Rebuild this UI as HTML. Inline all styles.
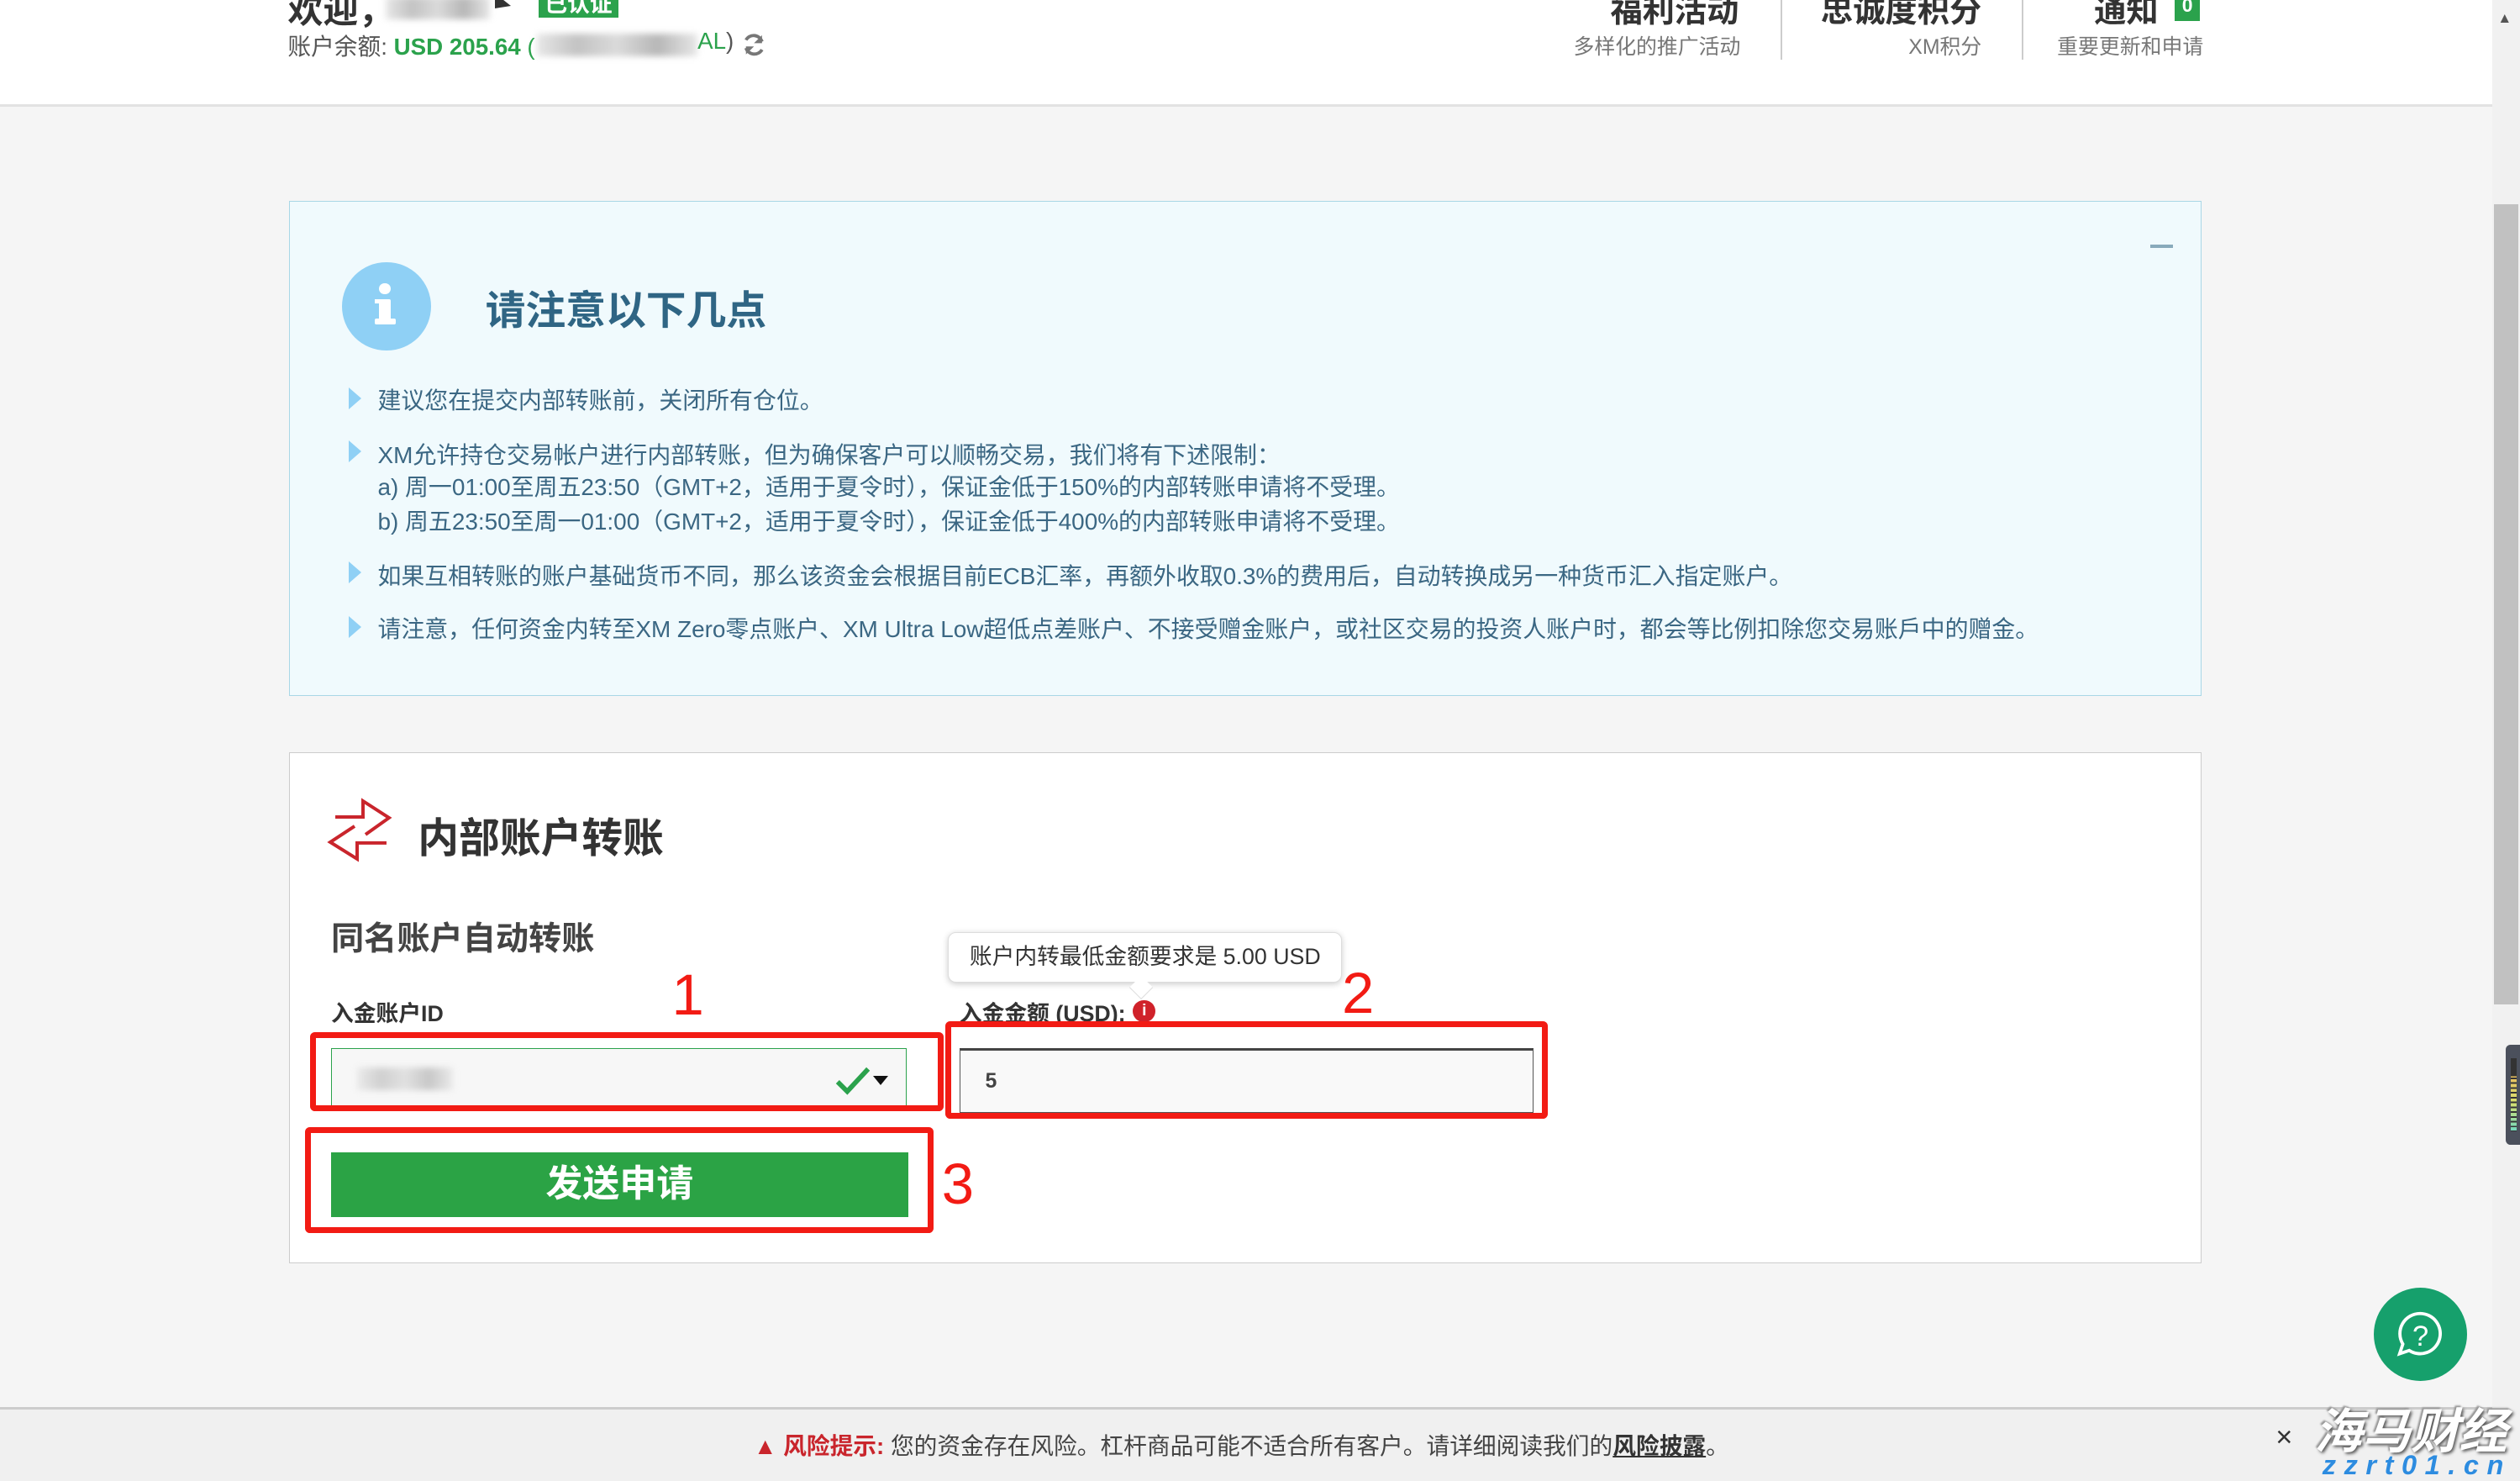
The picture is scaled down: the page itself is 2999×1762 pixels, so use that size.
<!DOCTYPE html>
<html><head><meta charset="utf-8">
<style>
html,body{margin:0;padding:0;}
body{width:2999px;height:1761px;overflow:hidden;background:#f5f5f5;font-family:"Liberation Sans","Noto Sans CJK SC",sans-serif;}
#w{position:absolute;left:0;top:0;width:1568px;height:921px;zoom:1.91263;overflow:hidden;background:#f5f5f5;}
.a{position:absolute;white-space:nowrap;}
.blur{position:absolute;background:linear-gradient(90deg,#ddd,#aaa,#ccc,#999,#ddd);filter:blur(2px);opacity:.7;}
.li{position:absolute;left:235px;font-size:14.6px;color:#3b6783;white-space:nowrap;}
.tri{position:absolute;left:217px;width:0;height:0;border-top:7px solid transparent;border-bottom:7px solid transparent;border-left:8px solid #8fd0f5;}
.red{position:absolute;border:4px solid #f21b14;border-radius:3px;box-sizing:border-box;}
.num{position:absolute;color:#f21b14;font-size:36px;font-family:"Liberation Sans",sans-serif;}
</style></head><body><div id="w">
<div class="a" style="left:0;top:0;width:1551px;height:65px;background:#fff;border-bottom:2px solid #e2e2e2;"></div>
<div class="a" style="left:179px;top:-11px;font-size:22px;font-weight:bold;color:#333;">欢迎，</div>
<div class="blur" style="left:240px;top:-2px;width:65px;height:14px;"></div>
<div class="a" style="left:308px;top:-4px;width:0;height:0;border-left:10px solid #333;border-top:8px solid transparent;border-bottom:2px solid transparent;"></div>
<div class="a" style="left:335px;top:-6px;width:50px;height:17px;background:#2ba24c;color:#fff;font-size:14px;font-weight:bold;text-align:center;line-height:17px;">已认证</div>
<div class="a" style="left:179px;top:17px;font-size:14.5px;color:#555;">账户余额: <span style="color:#2ba24c;font-weight:bold;">USD 205.64</span> <span style="color:#2ba24c;">(</span></div>
<div class="blur" style="left:334px;top:21px;width:100px;height:14px;"></div>
<div class="a" style="left:434px;top:17px;font-size:14.5px;color:#2ba24c;">AL<span style="color:#555">)</span></div>
<svg class="a" style="left:461px;top:20px" width="16" height="16" viewBox="0 0 16 16"><path d="M13 6A5.5 5.5 0 0 0 3 5M3 10A5.5 5.5 0 0 0 13 11" fill="none" stroke="#777" stroke-width="2"/><path d="M13 2v5h-5z M3 14v-5h5z" fill="#777"/></svg>
<div class="a" style="left:960px;top:-9px;width:122px;text-align:right;font-size:20px;font-weight:bold;color:#333;">福利活动</div>
<div class="a" style="left:960px;top:19px;width:123px;text-align:right;font-size:13px;color:#777;">多样化的推广活动</div>
<div class="a" style="left:1108px;top:0;width:1px;height:37px;background:#ccc;"></div>
<div class="a" style="left:1110px;top:-9px;width:123px;text-align:right;font-size:20px;font-weight:bold;color:#333;">忠诚度积分</div>
<div class="a" style="left:1110px;top:19px;width:123px;text-align:right;font-size:13px;color:#777;">XM积分</div>
<div class="a" style="left:1258px;top:0;width:1px;height:37px;background:#ccc;"></div>
<div class="a" style="left:1260px;top:-9px;width:83px;text-align:right;font-size:20px;font-weight:bold;color:#333;">通知</div>
<div class="a" style="left:1353px;top:-4px;width:16px;height:17px;background:#2ba24c;color:#fff;font-size:12px;font-weight:bold;text-align:center;line-height:15px;">0</div>
<div class="a" style="left:1260px;top:19px;width:111px;text-align:right;font-size:13px;color:#777;">重要更新和申请</div>
<div class="a" style="left:1551px;top:0;width:17px;height:921px;background:#f1f1f1;"></div>
<div class="a" style="left:1552px;top:127px;width:15px;height:498px;background:#c1c1c1;"></div>
<div class="a" style="left:1554px;top:6px;font-size:9px;color:#555;">▲</div>
<div class="a" style="left:1559px;top:650px;width:12px;height:62px;background:#4b505c;border-radius:3px;"></div>
<div class="a" style="left:1562px;top:658px;width:4px;height:46px;background:repeating-linear-gradient(#333 0 1px,transparent 1px 3px),linear-gradient(#333 25%,#e8c060 25%,#d8e070 60%,#70d8c0);"></div>
<div class="a" style="left:180px;top:125px;width:1189px;height:307px;background:#f0fafd;border:1px solid #a9d7e6;"></div>
<div class="a" style="left:1338px;top:152px;width:14px;height:2px;background:#8ab;"></div>
<div class="a" style="left:213px;top:163px;width:55px;height:55px;border-radius:50%;background:#8fd0f5;"></div>
<div class="a" style="left:236px;top:176px;width:7px;height:7px;border-radius:50%;background:#fff;"></div>
<div class="a" style="left:236px;top:186px;width:7px;height:14px;background:#fff;border-radius:1px;"></div>
<div class="a" style="left:233px;top:198px;width:13px;height:4px;background:#fff;border-radius:1px;"></div>
<div class="a" style="left:233px;top:186px;width:6px;height:3px;background:#fff;"></div>
<div class="a" style="left:302px;top:173px;font-size:25px;font-weight:bold;color:#2f6584;">请注意以下几点</div>
<div class="tri" style="top:241px"></div><div class="li" style="top:238px">建议您在提交内部转账前，关闭所有仓位。</div>
<div class="tri" style="top:274px"></div><div class="li" style="top:272px">XM允许持仓交易帐户进行内部转账，但为确保客户可以顺畅交易，我们将有下述限制：</div>
<div class="li" style="top:292px">a) 周一01:00至周五23:50（GMT+2，适用于夏令时），保证金低于150%的内部转账申请将不受理。</div>
<div class="li" style="top:313px">b) 周五23:50至周一01:00（GMT+2，适用于夏令时），保证金低于400%的内部转账申请将不受理。</div>
<div class="tri" style="top:349px"></div><div class="li" style="top:347px">如果互相转账的账户基础货币不同，那么该资金会根据目前ECB汇率，再额外收取0.3%的费用后，自动转换成另一种货币汇入指定账户。</div>
<div class="tri" style="top:383px"></div><div class="li" style="top:380px">请注意，任何资金内转至XM Zero零点账户、XM Ultra Low超低点差账户、不接受赠金账户，或社区交易的投资人账户时，都会等比例扣除您交易账戶中的赠金。</div>
<div class="a" style="left:180px;top:468px;width:1189px;height:317px;background:#fff;border:1px solid #ccc;"></div>
<svg class="a" style="left:198.7px;top:491.5px" width="57.5" height="47" viewBox="0 0 110 90"><path d="M19 32H52V13L83 33L55 53M80 63H45V82L13 62L42 43" fill="none" stroke="#c9252c" stroke-width="4"/></svg>
<div class="a" style="left:260px;top:501px;font-size:25.5px;font-weight:bold;color:#333;">内部账户转账</div>
<div class="a" style="left:206px;top:568px;font-size:20.5px;font-weight:bold;color:#444;">同名账户自动转账</div>
<div class="a" style="left:206px;top:619px;font-size:14px;font-weight:bold;color:#333;">入金账户ID</div>
<div class="a" style="left:206px;top:652px;width:357px;height:38px;background:#f7f7f7;border:1px solid #2ba24c;"></div>
<div class="blur" style="left:222px;top:664px;width:60px;height:14px;opacity:.5"></div>
<svg class="a" style="left:519px;top:662px" width="24" height="20" viewBox="0 0 24 20"><path d="M2 11L8 17L21 3" fill="none" stroke="#2ba24c" stroke-width="3"/></svg>
<div class="a" style="left:543px;top:669px;width:0;height:0;border-left:5px solid transparent;border-right:5px solid transparent;border-top:6px solid #111;"></div>
<div class="a" style="left:597px;top:619px;font-size:14px;font-weight:bold;color:#333;">入金金额 (USD):</div>
<div class="a" style="left:705px;top:622px;width:14px;height:14px;border-radius:50%;background:#d0222a;color:#fff;font-size:10px;font-weight:bold;text-align:center;line-height:14px;">i</div>
<div class="a" style="left:590px;top:580px;width:244px;height:30px;background:#fff;border:1px solid #ddd;border-radius:5px;box-shadow:0 1px 4px rgba(0,0,0,.2);font-size:14px;color:#333;line-height:30px;text-align:center;">账户内转最低金额要求是 5.00 USD</div>
<div class="a" style="left:705px;top:609px;width:10px;height:10px;background:#fff;transform:rotate(45deg);border-right:1px solid #ddd;border-bottom:1px solid #ddd;"></div>
<div class="a" style="left:597px;top:652px;width:356px;height:38px;background:#f9f9f9;border:1px solid #555;border-top:2px solid #444;"></div>
<div class="a" style="left:613px;top:665px;font-size:13px;font-weight:bold;color:#444;">5</div>
<div class="a" style="left:206px;top:717px;width:359px;height:40px;background:#2ba345;color:#fff;font-size:23px;font-weight:bold;text-align:center;line-height:40px;">发送申请</div>
<div class="red" style="left:193px;top:642px;width:394px;height:49px;"></div>
<div class="red" style="left:588px;top:635px;width:375px;height:61px;"></div>
<div class="red" style="left:190px;top:701px;width:391px;height:66px;"></div>
<div class="num" style="left:418px;top:598px;">1</div>
<div class="num" style="left:835px;top:597px;">2</div>
<div class="num" style="left:586px;top:716px;">3</div>
<div class="a" style="left:1477px;top:801px;width:58px;height:58px;border-radius:50%;background:#16a06c;"></div>
<svg class="a" style="left:1490px;top:814px" width="32" height="32" viewBox="0 0 32 32"><path d="M16 3A12.5 12.5 0 1 1 9 26L3 28L5 22A12.5 12.5 0 0 1 16 3Z" fill="none" stroke="#fff" stroke-width="2"/><text x="16" y="23" text-anchor="middle" fill="#fff" font-size="18" font-family="Liberation Sans">?</text></svg>
<div class="a" style="left:0;top:875px;width:1551px;height:46px;background:#f0f0f0;border-top:2px solid #ccc;"></div>
<div class="a" style="left:469px;top:888px;font-size:14.5px;color:#444;"><span style="color:#c9252c;font-weight:bold;">▲ 风险提示:</span> 您的资金存在风险。杠杆商品可能不适合所有客户。请详细阅读我们的<b style="text-decoration:underline;color:#333">风险披露</b>。</div>
<div class="a" style="left:1416px;top:884px;font-size:18px;color:#333;">×</div>
<div class="a" style="left:1440px;top:866px;font-size:30px;font-weight:bold;font-style:italic;color:#fff;text-shadow:1px 1px 2px #555,-1px -1px 1px #999;">海马财经</div>
<div class="a" style="left:1445px;top:902px;font-size:17px;font-weight:bold;font-style:italic;color:#2d8ce0;letter-spacing:5px;">zzrt01.cn</div>
</div></body></html>
